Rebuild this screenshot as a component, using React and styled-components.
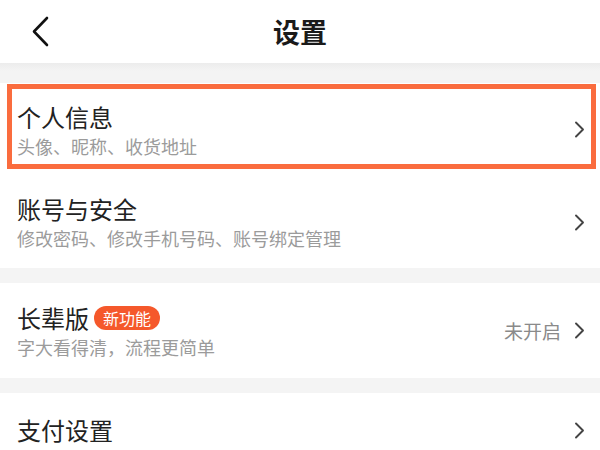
import React from "react";
import styled, { createGlobalStyle } from "styled-components";

const Global = createGlobalStyle`
  html, body { margin: 0; padding: 0; background: #f4f4f4; }
  body { font-family: "Noto Sans CJK SC", "Noto Sans", sans-serif; }
  * { box-sizing: border-box; }
`;

const Page = styled.div`
  width: 600px;
  height: 450px;
  overflow: hidden;
  background: #f4f4f4;
  display: flex;
  flex-direction: column;
`;

const Header = styled.header`
  height: 63px;
  flex: none;
  background: #fff;
  display: grid;
  grid-template-columns: 80px 1fr 80px;
  align-items: center;
`;

const BackButton = styled.div`
  display: flex;
  align-items: center;
  padding-left: 31px;
  height: 100%;
`;

const Title = styled.h1`
  margin: 0;
  text-align: center;
  font-size: 27px;
  line-height: 27px;
  font-weight: 700;
  color: #1a1a1a;
`;

const Band = styled.div`
  flex: none;
  height: ${(p) => p.$h}px;
  background: ${(p) => (p.$shadow ? "linear-gradient(#ececec, #f4f4f4 40%)" : "#f4f4f4")};
`;

const Row = styled.div`
  position: relative;
  flex: none;
  height: ${(p) => p.$h}px;
  background: #fff;
  display: flex;
  align-items: center;
  padding: 0 15px 0 17px;
`;

const Texts = styled.div`
  flex: 1;
  display: flex;
  flex-direction: column;
`;

const TitleLine = styled.div`
  display: flex;
  align-items: center;
  height: 24px;
`;

const RowTitle = styled.span`
  font-size: 24px;
  line-height: 24px;
  color: #222;
`;

const Sub = styled.div`
  margin-top: 8px;
  font-size: 18px;
  line-height: 18px;
  color: #9b9b9b;
`;

const Badge = styled.span`
  margin-left: 5px;
  height: 24px;
  padding: 0 9px;
  border-radius: 12px;
  background: #f5582b;
  color: #fff;
  font-size: 16px;
  line-height: 24px;
`;

const Value = styled.span`
  font-size: 19px;
  color: #8a8a8a;
  margin-right: 13px;
`;

const Highlight = styled.div`
  position: absolute;
  left: 7px;
  top: 1px;
  width: 589px;
  height: 85px;
  border: 5px solid #fa6c3e;
  pointer-events: none;
`;

const Chevron = () => (
  <svg width="11" height="17" viewBox="0 0 11 17" fill="none">
    <polyline points="2,1.5 9,8.5 2,15.5" stroke="#444" strokeWidth="1.9" strokeLinecap="round" strokeLinejoin="round" />
  </svg>
);

const BackIcon = () => (
  <svg width="18" height="31" viewBox="0 0 18 31" fill="none">
    <polyline points="16,2 3,15.5 16,29" stroke="#111" strokeWidth="2.6" strokeLinecap="round" strokeLinejoin="round" />
  </svg>
);

const Item = ({ title, sub, badge, value, h, highlight }) => (
  <Row $h={h}>
    <Texts>
      <TitleLine>
        <RowTitle>{title}</RowTitle>
        {badge && <Badge>{badge}</Badge>}
      </TitleLine>
      {sub && <Sub>{sub}</Sub>}
    </Texts>
    {value && <Value>{value}</Value>}
    <Chevron />
    {highlight && <Highlight />}
  </Row>
);

export default function App() {
  return (
    <>
      <Global />
      <Page>
        <Header>
          <BackButton>
            <BackIcon />
          </BackButton>
          <Title>设置</Title>
          <div />
        </Header>
        <Band $h={20} $shadow />
        <Item h={93} title="个人信息" sub="头像、昵称、收货地址" highlight />
        <Item h={92} title="账号与安全" sub="修改密码、修改手机号码、账号绑定管理" />
        <Band $h={15} />
        <Item h={95} title="长辈版" badge="新功能" sub="字大看得清，流程更简单" value="未开启" />
        <Band $h={15} />
        <Item h={74} title="支付设置" />
      </Page>
    </>
  );
}
